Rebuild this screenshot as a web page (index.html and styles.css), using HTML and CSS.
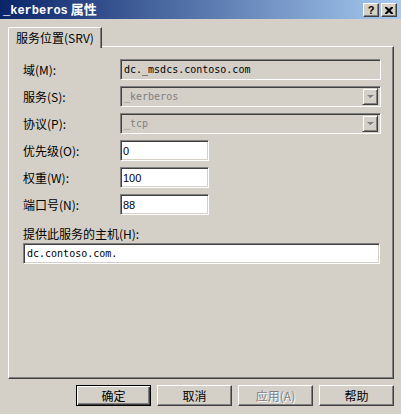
FILE: index.html
```html
<!DOCTYPE html>
<html lang="zh-CN">
<head>
<meta charset="utf-8">
<title>_kerberos 属性</title>
<link rel="stylesheet" href="styles.css">
</head>
<body>
<div class="window">
  <div class="titlebar">
    <span class="title"><span class="mono">_kerberos</span> 属性</span>
    <div class="tbtns">
      <span class="tbtn help">?</span>
      <span class="tbtn close">
        <svg width="8" height="7" viewBox="0 0 8 7"><path d="M0 0h2l2 2 2-2h2v1l-2.5 2.5L8 6v1H6L4 5 2 7H0V6l2.5-2.5L0 1z" fill="#000"/></svg>
      </span>
    </div>
  </div>
  <div class="content">
    <div class="tabs">
      <div class="tab">服务位置(SRV)</div>
    </div>
    <div class="panel">
      <div class="row">
        <span class="label">域(M):</span>
        <div class="field ro wide"><span class="mono">dc._msdcs.contoso.com</span></div>
      </div>
      <div class="row">
        <span class="label">服务(S):</span>
        <div class="field ro wide combo"><span class="mono dis">_kerberos</span><span class="dd"><svg width="7" height="5" viewBox="0 0 7 5"><path d="M1 1h6L4 4z" fill="#fff"/><path d="M0 0h7L3.5 3.5z" fill="#808080"/></svg></span></div>
      </div>
      <div class="row">
        <span class="label">协议(P):</span>
        <div class="field ro wide combo"><span class="mono dis">_tcp</span><span class="dd"><svg width="7" height="5" viewBox="0 0 7 5"><path d="M1 1h6L4 4z" fill="#fff"/><path d="M0 0h7L3.5 3.5z" fill="#808080"/></svg></span></div>
      </div>
      <div class="row">
        <span class="label">优先级(O):</span>
        <div class="field short"><span class="num">0</span></div>
      </div>
      <div class="row">
        <span class="label">权重(W):</span>
        <div class="field short"><span class="num">100</span></div>
      </div>
      <div class="row">
        <span class="label">端口号(N):</span>
        <div class="field short"><span class="num">88</span></div>
      </div>
      <div class="host">
        <span class="label">提供此服务的主机(H):</span>
        <div class="field full"><span class="mono">dc.contoso.com.</span></div>
      </div>
    </div>
    <div class="buttons">
      <div class="btn default"><span>确定</span></div>
      <div class="btn"><span>取消</span></div>
      <div class="btn disabled"><span>应用(A)</span></div>
      <div class="btn"><span>帮助</span></div>
    </div>
  </div>
</div>
</body>
</html>
```

FILE: styles.css
```css
html, body {
  margin: 0;
  padding: 0;
  background: #d4d0c8;
}
.window {
  width: 401px;
  height: 414px;
  background: #d4d0c8;
  font-family: "Noto Sans CJK SC", sans-serif;
  font-size: 12px;
  color: #000;
  overflow: hidden;
}
.titlebar {
  height: 19px;
  background: linear-gradient(to right, #0a246a, #a6caf0);
  display: flex;
  align-items: center;
  justify-content: space-between;
  padding: 0 4px 0 3px;
}
.title {
  color: #fff;
  font-weight: bold;
  font-size: 13px;
  line-height: 19px;
}
.title .mono {
  font-family: "Liberation Mono", monospace;
  font-size: 12px;
}
.tbtns {
  display: flex;
  gap: 2px;
  padding-top: 1px;
}
.tbtn {
  width: 16px;
  height: 14px;
  box-sizing: border-box;
  background: #d4d0c8;
  border-top: 1px solid #fff;
  border-left: 1px solid #fff;
  border-right: 1px solid #404040;
  border-bottom: 1px solid #404040;
  box-shadow: inset -1px -1px 0 #808080;
  display: flex;
  align-items: center;
  justify-content: center;
  font-family: "Liberation Sans", sans-serif;
  font-weight: bold;
  font-size: 11px;
  line-height: 12px;
}
.content {
  padding: 8px 7px 0 8px;
}
.tabs {
  display: flex;
  height: 20px;
  position: relative;
  z-index: 1;
  margin-bottom: -1px;
}
.tab {
  width: 94px;
  height: 21px;
  box-sizing: border-box;
  background: #d4d0c8;
  border-top: 1px solid #fff;
  border-left: 1px solid #fff;
  border-right: 1px solid #404040;
  border-top-left-radius: 2px;
  box-shadow: inset -1px 0 0 #808080;
  padding: 1px 0 0 7px;
  line-height: 17px;
  white-space: nowrap;
}
.panel {
  height: 333px;
  box-sizing: border-box;
  border-top: 1px solid #fff;
  border-left: 1px solid #fff;
  border-right: 1px solid #404040;
  border-bottom: 1px solid #404040;
  box-shadow: inset -1px -1px 0 #808080;
  padding: 12px 12px 0 14px;
  display: flex;
  flex-direction: column;
  gap: 6px;
}
.row {
  display: flex;
  align-items: center;
  height: 21px;
}
.label {
  width: 97px;
  flex: none;
  white-space: nowrap;
  line-height: 14px;
}
.field {
  height: 21px;
  box-sizing: border-box;
  background: #fff;
  border-top: 1px solid #808080;
  border-left: 1px solid #808080;
  border-right: 1px solid #fff;
  border-bottom: 1px solid #fff;
  box-shadow: inset 1px 1px 0 #404040, inset -1px -1px 0 #d4d0c8;
  display: flex;
  align-items: center;
  padding: 0 3px;
}
.field.ro {
  background: #d4d0c8;
}
.wide {
  flex: 1;
}
.short {
  width: 89px;
  padding: 0 2px;
}
.full {
  width: 357px;
}
.combo {
  justify-content: space-between;
  padding-right: 2px;
}
.dd {
  width: 16px;
  height: 17px;
  box-sizing: border-box;
  border-top: 1px solid #d4d0c8;
  border-left: 1px solid #d4d0c8;
  border-right: 1px solid #404040;
  border-bottom: 1px solid #404040;
  box-shadow: inset 1px 1px 0 #fff, inset -1px -1px 0 #808080;
  display: flex;
  align-items: center;
  justify-content: center;
  padding-top: 1px;
}
.mono {
  font-family: "DejaVu Sans Mono", monospace;
  font-size: 10px;
  letter-spacing: 0;
}
.dis {
  color: #808080;
}
.num {
  font-family: "Liberation Sans", sans-serif;
  font-size: 11px;
}
.host {
  display: flex;
  flex-direction: column;
  gap: 2px;
  margin-top: 6px;
}
.host .label {
  width: auto;
}
.buttons {
  display: flex;
  justify-content: flex-end;
  gap: 6px;
  margin-top: 6px;
}
.btn {
  width: 75px;
  height: 21px;
  box-sizing: border-box;
  background: #d4d0c8;
  border-top: 1px solid #fff;
  border-left: 1px solid #fff;
  border-right: 1px solid #404040;
  border-bottom: 1px solid #404040;
  box-shadow: inset -1px -1px 0 #808080;
  display: flex;
  align-items: center;
  justify-content: center;
  line-height: 14px;
}
.btn.default {
  border: 1px solid #000;
  box-shadow: inset 1px 1px 0 #fff, inset -1px -1px 0 #404040, inset -2px -2px 0 #808080;
}
.btn.disabled {
  color: #808080;
  text-shadow: 1px 1px 0 #fff;
}
```
